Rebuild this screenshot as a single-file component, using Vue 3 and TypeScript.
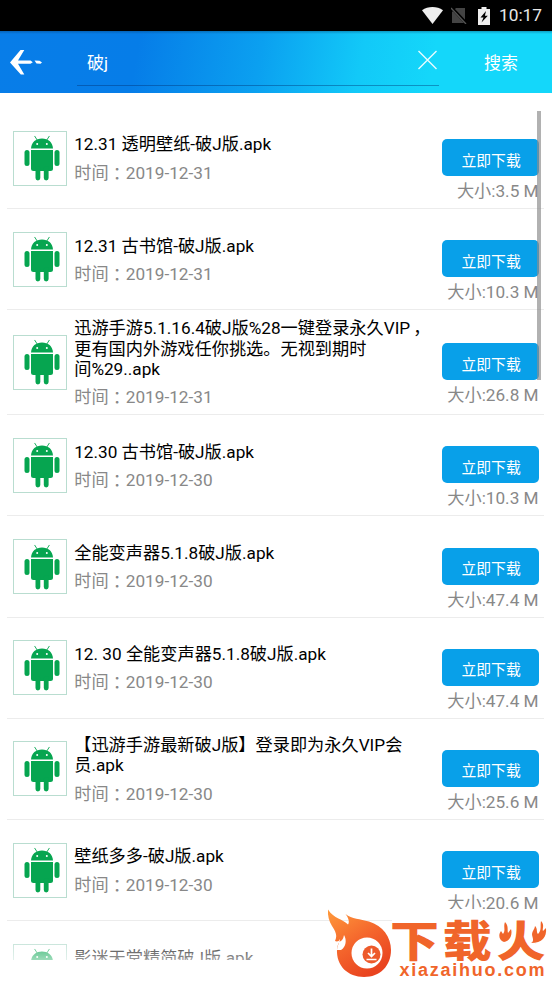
<script setup lang="ts">
interface ApkItem {
  title: string[]
  date: string
  size?: string
}

const items: ApkItem[] = [
  { title: ['12.31 透明壁纸-破J版.apk'], date: '2019-12-31', size: '3.5 M' },
  { title: ['12.31 古书馆-破J版.apk'], date: '2019-12-31', size: '10.3 M' },
  {
    title: ['迅游手游5.1.16.4破J版%28一键登录永久VIP，', '更有国内外游戏任你挑选。无视到期时', '间%29..apk'],
    date: '2019-12-31',
    size: '26.8 M',
  },
  { title: ['12.30 古书馆-破J版.apk'], date: '2019-12-30', size: '10.3 M' },
  { title: ['全能变声器5.1.8破J版.apk'], date: '2019-12-30', size: '47.4 M' },
  { title: ['12. 30 全能变声器5.1.8破J版.apk'], date: '2019-12-30', size: '47.4 M' },
  { title: ['【迅游手游最新破J版】登录即为永久VIP会', '员.apk'], date: '2019-12-30', size: '25.6 M' },
  { title: ['壁纸多多-破J版.apk'], date: '2019-12-30', size: '20.6 M' },
  { title: ['影迷天堂精简破J版.apk'], date: '' },
]

// Separates a closing full-width comma, which is drawn centred in its cell.
const body = (line: string): string => line.replace(/，$/, '')
const endsWithComma = (line: string): boolean => line.endsWith('，')
</script>

<template>
  <div class="screen">
    <div class="status">
      <svg class="wifi" width="21" height="17" viewBox="0 0 21 17"><path d="M0 3.2C6-1 15-1 21 3.2L10.5 17Z" fill="#eee" /></svg>
      <svg class="sim" width="16" height="17" viewBox="0 0 16 17">
        <path d="M5 1h9v15H1V5Z" fill="#444" />
        <path d="M0 0L16 17" stroke="#000" stroke-width="3" />
        <path d="M0 1L15 17" stroke="#555" stroke-width="1.3" />
      </svg>
      <svg class="battery" width="12" height="18" viewBox="0 0 12 18">
        <path d="M3.5 0h5v2H12v16H0V2h3.5Z" fill="#eee" />
        <path d="M8 4L2.500 10.500h3L3.500 15.500 9.800 8.800H6.900Z" fill="#000" />
      </svg>
      <span class="clock">10:17</span>
    </div>
    <header class="bar">
      <svg class="back" width="34" height="27" viewBox="0 0 34 27">
        <path d="M10.500 1H14.300L8 11.600H20.500L22.800 13.200 20.500 14.800H8L14.300 25.500H10.800L0 13.500Z" fill="#fff" />
        <path d="M24.500 11.600L29.500 11.700 32 13.500 30.500 14.800 26.500 14.500Z" fill="#fff" />
      </svg>
      <div class="field">
        <span class="query">破j</span>
        <svg class="clear" width="19" height="20" viewBox="0 0 19 20"><path d="M.5 1L18.5 19M18.5 1L.5 19" stroke="#e9fcff" stroke-width="1.4" /></svg>
      </div>
      <span class="search">搜索</span>
    </header>
    <main class="list">
      <div v-for="(item, i) in items" :key="i" class="row">
        <div class="thumb">
          <svg width="38" height="50" viewBox="0 0 38 50">
            <g fill="#06a550">
              <path d="M8 16.500C8.400 10 13 6.500 19 6.500S29.600 10 30 16.500Z" />
              <path d="M8 18h22v18.500a2.500 2.500 0 0 1-2.500 2.500h-17A2.500 2.500 0 0 1 8 36.500Z" />
              <rect x="1.500" y="18" width="5" height="16" rx="2.500" />
              <rect x="31.500" y="18" width="5" height="16" rx="2.500" />
              <rect x="12.500" y="34" width="4.800" height="14.500" rx="2.400" />
              <rect x="20.800" y="34" width="4.800" height="14.500" rx="2.400" />
            </g>
            <path d="M14.500 8.500L11.800 4.300M23.500 8.500L26.200 4.300" stroke="#06a550" stroke-width=".9" stroke-linecap="round" />
            <circle cx="14.200" cy="12" r="1" fill="#fff" /><circle cx="23.800" cy="12" r="1" fill="#fff" />
          </svg>
        </div>
        <div class="info">
          <div class="title">
            <div v-for="line in item.title" :key="line">{{ body(line) }}<span v-if="endsWithComma(line)" class="comma">，</span></div>
          </div>
          <div class="date"><template v-if="item.date">时间<span class="colon">：</span>{{ item.date }}</template></div>
        </div>
        <div v-if="item.size" class="side">
          <button class="download">立即下载</button>
          <div class="size">大小:{{ item.size }}</div>
        </div>
      </div>
    </main>
    <div class="fade"></div>
    <div class="scrollbar"></div>
    <svg class="watermark" width="232" height="73" viewBox="320 908 232 73">
      <defs>
        <linearGradient id="flame" x1="0" y1="0" x2=".6" y2="1">
          <stop offset="0" stop-color="#ff9a3c" /><stop offset=".55" stop-color="#f4652c" /><stop offset="1" stop-color="#e9431f" />
        </linearGradient>
      </defs>
      <rect x="392" y="909" width="160" height="72" fill="#fff" />
      <path d="M328 909.500C334 919 343 919 348 924.500C350 922 348 917 345.500 914C352 919 360 919 369 921.500C383 926 391 937 391 950C391 966 380 977 364 977C348 977 336 966 337 949C337.500 944 340 942 340 939C339 941.500 337 942 335 941C338 935 335 931 332 926C329 921 327.500 916 328 909.500Z" fill="url(#flame)" />
      <path d="M336 941C340 943 343 941 344 935C347 940 346 947 341 950L337 950C337 946 339 944 339 942Z" fill="#fff" />
      <circle cx="367" cy="953" r="15.500" fill="#fff" />
      <circle cx="371.500" cy="954.500" r="9" fill="#ed5a2b" />
      <path d="M371.500 948.500v7M368 953l3.500 3.500 3.500-3.500M366.500 959.500h10" stroke="#fff" stroke-width="1.700" fill="none" />
      <g class="brand" transform="translate(391 957) scale(.96 .84)">
        <text x="-1 54 110" y="0">下载火</text>
      </g>
      <path d="M497 918H512V939L510 944H497ZM529 918H549V943H529Z" fill="#fff" />
      <g fill="#f0652a">
        <path d="M505 922C509 926 507 930 508 933L511 929C513 936 509 941 504 942C499 940 498 935 501 931L503 934C506 930 503 927 505 922Z" />
        <path d="M541 921C545 925 542 929 543 931L546 928C547 937 542 943 531 943C535 941 532 937 532 934C532 931 535 929 535 926C538 929 536 932 538 934C542 930 540 926 541 921Z" />
      </g>
      <text class="domain" x="399.500" y="976" textLength="145" lengthAdjust="spacing">xiazaihuo.com</text>
    </svg>
  </div>
</template>

<style>
body {
  overflow: hidden;
  background: #fff;
}
</style>

<style scoped>
.screen {
  position: relative;
  width: 552px;
  height: 981px;
  overflow: hidden;
  background: #fff;
  font-family: Roboto, 'Noto Sans CJK SC', sans-serif;
  font-size: 17.2px;
}
.status {
  display: flex;
  align-items: center;
  justify-content: flex-end;
  height: 31px;
  padding-right: 10px;
  box-sizing: border-box;
  background: #000;
}
.sim {
  margin-left: 8px;
}
.battery {
  margin-left: 11px;
}
.clock {
  margin-left: 9px;
  color: #e8e8e8;
  font-size: 17.3px;
  line-height: 31px;
}
.bar {
  display: flex;
  align-items: center;
  height: 62px;
  background:
    linear-gradient(rgba(0, 50, 90, 0.35), rgba(0, 50, 90, 0) 3px),
    linear-gradient(100deg, #087de8 0%, #067de8 25%, #0ba0f0 47%, #12c9f8 65%, #14d7fa 78%, #14d7fa 100%);
  color: #fff;
}
.back {
  margin-left: 10px;
}
.field {
  display: flex;
  align-items: center;
  justify-content: space-between;
  box-sizing: border-box;
  width: 362px;
  height: 45px;
  margin: 0 0 -3px 33px;
  padding: 0 2px 0 10px;
  border-bottom: 1px solid rgba(0, 45, 110, 0.4);
}
.query {
  font-size: 17px;
  line-height: 24px;
}
.clear {
  margin-bottom: 6px;
}
.search {
  margin: -2px 0 0 45px;
  font-size: 17px;
}
.list {
  box-sizing: border-box;
  height: 867px;
  overflow: hidden;
  padding: 15px 8px 0 7px;
}
.row {
  display: flex;
  align-items: center;
  box-sizing: border-box;
  min-height: 101.2px;
  padding: 7px 6px 7px;
  border-bottom: 1px solid #ececec;
}
.thumb {
  display: flex;
  flex: none;
  align-items: center;
  justify-content: center;
  box-sizing: border-box;
  width: 54px;
  height: 55px;
  padding: 0 0 2px 3px;
  border: 1px solid #b9ddd0;
}
.info {
  flex: 1;
  padding-top: 1px;
  margin-left: 7.2px;
  white-space: nowrap;
}
.title {
  color: #000;
  line-height: 20.3px;
}
.date {
  min-height: 20px;
  margin-top: 8px;
  color: #888;
  line-height: 20px;
}
.colon {
  display: inline-block;
  font-family: 'Noto Sans CJK TC', sans-serif;
  line-height: 16px;
  transform: translate(0, 1px);
}
.comma {
  display: inline-block;
  line-height: 16px;
  transform: translateX(3px);
}
.side {
  display: flex;
  flex: none;
  flex-direction: column;
  align-items: flex-end;
  width: 97px;
  height: 58px;
  margin: 20px -0.6px 0 0;
}
.download {
  flex: none;
  width: 97px;
  height: 37px;
  padding: 3px 0 0 2px;
  border: 0;
  border-radius: 5px;
  background: #08a0e9;
  color: #fff;
  font-family: inherit;
  font-size: 14.8px;
}
.size {
  margin-top: 5px;
  color: #888;
  line-height: 20px;
  white-space: nowrap;
}
.fade {
  position: absolute;
  inset: 932px 0 0;
  background: linear-gradient(rgba(255, 255, 255, 0), rgba(255, 255, 255, 0.6) 28px, #fff 28px);
}
.scrollbar {
  position: absolute;
  top: 111px;
  left: 537px;
  width: 4px;
  height: 269px;
  background: rgba(140, 140, 140, 0.68);
}
.watermark {
  position: absolute;
  top: 908px;
  left: 320px;
}
.brand {
  font-family: 'Noto Sans CJK SC', sans-serif;
  font-size: 51px;
  font-weight: 900;
  fill: #f0652a;
}
.domain {
  font-family: 'Liberation Sans', sans-serif;
  font-size: 18px;
  font-weight: 700;
  fill: #f0652a;
}
</style>
